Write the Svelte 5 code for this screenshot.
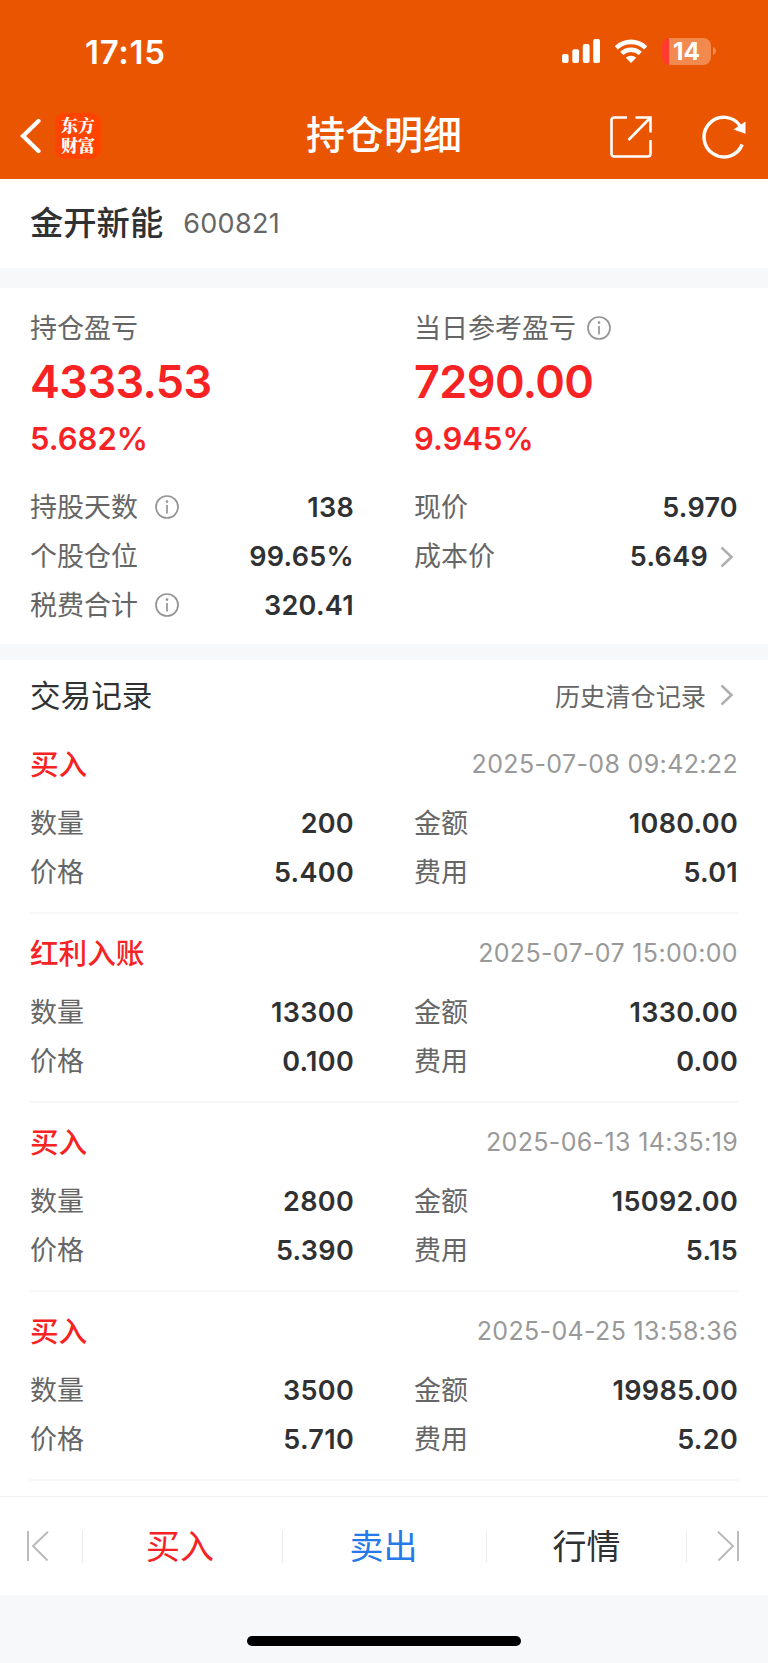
<script>
	const position = [
		{ label: '持仓盈亏', amount: '4333.53', rate: '5.682%', info: false },
		{ label: '当日参考盈亏', amount: '7290.00', rate: '9.945%', info: true }
	];

	const details = [
		{ label: '持股天数', value: '138', info: true },
		{ label: '现价', value: '5.970' },
		{ label: '个股仓位', value: '99.65%' },
		{ label: '成本价', value: '5.649', link: true },
		{ label: '税费合计', value: '320.41', info: true }
	];

	const records = [
		{ type: '买入', time: '2025-07-08 09:42:22', count: '200', total: '1080.00', price: '5.400', fee: '5.01' },
		{ type: '红利入账', time: '2025-07-07 15:00:00', count: '13300', total: '1330.00', price: '0.100', fee: '0.00' },
		{ type: '买入', time: '2025-06-13 14:35:19', count: '2800', total: '15092.00', price: '5.390', fee: '5.15' },
		{ type: '买入', time: '2025-04-25 13:58:36', count: '3500', total: '19985.00', price: '5.710', fee: '5.20' }
	];
</script>

{#snippet infoIcon()}
	<svg class="info" width="24" height="24" viewBox="0 0 24 24" aria-hidden="true">
		<circle cx="12" cy="12" r="11" />
		<path d="M12 10v8.5" />
		<circle class="dot" cx="12" cy="6.6" r="1.3" />
	</svg>
{/snippet}

{#snippet arrow()}
	<svg class="arrow" width="14" height="22" viewBox="0 0 14 22" aria-hidden="true">
		<path d="M1.5 1.5 11.5 11l-10 9.5" />
	</svg>
{/snippet}

<div class="page">
	<header>
		<div class="status">
			<span class="clock">17:15</span>
			<div class="indicators">
				<svg width="38" height="24" viewBox="0 0 38 24">
					<rect x="0" y="15" width="6.6" height="9" rx="2" />
					<rect x="10.3" y="10.3" width="6.8" height="13.7" rx="2" />
					<rect x="20.8" y="5" width="6.8" height="19" rx="2" />
					<rect x="31.2" y="0" width="6.8" height="24" rx="2" />
				</svg>
				<svg class="wifi" width="34" height="24" viewBox="0 0 34 24">
					<path d="M2.3 8.8a21.3 21.3 0 0 1 29.4 0" />
					<path d="M7.7 14.4a13.6 13.6 0 0 1 18.6 0" />
					<path class="solid" d="M17 24l-5.2-5.2a7.8 7.8 0 0 1 10.4 0z" />
				</svg>
				<div class="battery"><span>14</span></div>
				<svg class="nub" width="3" height="8" viewBox="0 0 3 8">
					<path d="M0 0c4 1.6 4 6.4 0 8z" />
				</svg>
			</div>
		</div>
		<nav>
			<div class="side">
				<svg width="22" height="36" viewBox="0 0 22 36">
					<path class="back" d="M19.5 3 4 18 19.5 33" />
				</svg>
				<div class="logo">东方财富</div>
			</div>
			<h1>持仓明细</h1>
			<div class="side actions">
				<svg width="42" height="42" viewBox="0 0 42 42">
					<path d="M17 1.5H4A2.5 2.5 0 0 0 1.5 4v34A2.5 2.5 0 0 0 4 40.5h34a2.5 2.5 0 0 0 2.5-2.5V24" />
					<path d="M25.5 1.5h15v15M40 2 18.5 24" />
				</svg>
				<svg width="44" height="44" viewBox="0 0 44 44">
					<path class="turn" d="M40.2 29.5A19.8 19.8 0 1 1 38.2 11" />
					<path class="tip" d="M43.5 6.5v12.3l-12-4.3z" />
				</svg>
			</div>
		</nav>
	</header>

	<section class="stock">
		<h2>金开新能</h2>
		<span>600821</span>
	</section>

	<section class="summary">
		<div class="grid">
			{#each position as item}
				<div class="profit">
					<div class="label">
						{item.label}
						{#if item.info}{@render infoIcon()}{/if}
					</div>
					<div class="amount">{item.amount}</div>
					<div class="rate">{item.rate}</div>
				</div>
			{/each}
		</div>
		<div class="grid details">
			{#each details as item}
				<div class="row">
					<span class="label">
						{item.label}
						{#if item.info}{@render infoIcon()}{/if}
					</span>
					<span class="value">
						{item.value}
						{#if item.link}{@render arrow()}{/if}
					</span>
				</div>
			{/each}
		</div>
	</section>

	<section class="trades">
		<div class="heading">
			<h3>交易记录</h3>
			<a href="#history">历史清仓记录 {@render arrow()}</a>
		</div>
		{#each records as record}
			<article>
				<div class="title">
					<strong>{record.type}</strong>
					<time>{record.time}</time>
				</div>
				<div class="grid">
					<div class="row"><span class="label">数量</span><span class="value">{record.count}</span></div>
					<div class="row"><span class="label">金额</span><span class="value">{record.total}</span></div>
					<div class="row"><span class="label">价格</span><span class="value">{record.price}</span></div>
					<div class="row"><span class="label">费用</span><span class="value">{record.fee}</span></div>
				</div>
			</article>
		{/each}
	</section>

	<footer>
		<div class="edge">
			<svg width="22" height="30" viewBox="0 0 22 30">
				<path d="M1 0v30M21 .7 6 15l14.5 14.5" />
			</svg>
		</div>
		<div class="tab buy">买入</div>
		<div class="tab sell">卖出</div>
		<div class="tab quote">行情</div>
		<div class="edge last">
			<svg width="22" height="30" viewBox="0 0 22 30">
				<path d="M21 0v30M1 .7 16 15 1.5 29.5" />
			</svg>
		</div>
	</footer>
	<div class="home"><i></i></div>
</div>

<style>
	:global(body) {
		margin: 0;
		background: #f7f8fa;
	}

	.page {
		width: 768px;
		height: 1663px;
		overflow: hidden;
		background: #f7f8fa;
		color: #303133;
		font-family: Inter, 'Noto Sans CJK SC', sans-serif;
		font-size: 27px;
	}

	h1,
	h2,
	h3 {
		margin: 0;
		font-weight: 500;
	}

	svg {
		display: block;
		flex: none;
	}

	header {
		height: 179px;
		background: #ea5502;
		color: #fff;
	}

	.status {
		display: flex;
		justify-content: space-between;
		align-items: center;
		height: 102px;
		padding: 0 52px 0 85px;
	}

	.clock {
		margin-top: 1px;
		font-size: 33px;
		font-weight: 600;
		letter-spacing: 0.7px;
	}

	.indicators {
		display: flex;
		align-items: center;
		fill: #fff;
	}

	.wifi {
		margin: 0 14px;
		fill: none;
		stroke: #fff;
		stroke-width: 4.6;
	}

	.wifi .solid {
		fill: #fff;
		stroke: none;
	}

	.battery {
		width: 49px;
		height: 27px;
		border-radius: 8px;
		background: linear-gradient(to right, #ff3b30 7px, #f28a50 7px);
		font-size: 24.5px;
		font-weight: 700;
		line-height: 27px;
		text-align: center;
	}

	.nub {
		margin-left: 2px;
		fill: #f28a50;
	}

	nav {
		display: flex;
		align-items: center;
		height: 68px;
	}

	.side {
		display: flex;
		align-items: center;
		width: 234px;
		padding-left: 19px;
	}

	nav svg {
		fill: none;
		stroke: #fff;
		stroke-width: 2.6;
	}

	nav .back {
		stroke-width: 4.2;
		stroke-linecap: round;
	}

	nav .turn {
		stroke-width: 3.4;
	}

	nav .tip {
		fill: #fff;
		stroke: none;
	}

	.logo {
		width: 46px;
		height: 46px;
		margin-left: 14px;
		border-radius: 9px;
		background: #ff4400;
		box-sizing: border-box;
		padding: 2px 6px 0;
		font-family: 'Noto Serif CJK SC', 'Noto Sans CJK SC', serif;
		font-size: 17px;
		font-weight: 900;
		line-height: 20px;
	}

	h1 {
		flex: 1;
		font-size: 39px;
		line-height: 68px;
		text-align: center;
		margin-top: -3px;
	}

	.actions {
		justify-content: flex-end;
		gap: 50px;
		width: 231px;
		padding: 2px 22px 0 0;
	}

	.stock {
		display: flex;
		align-items: center;
		height: 89px;
		padding: 0 30px;
		background: #fff;
	}

	.stock h2 {
		margin-top: -6px;
		font-size: 33.3px;
	}

	.stock span {
		margin-left: 20px;
		color: #666;
		letter-spacing: 0.3px;
	}

	.summary {
		margin-top: 20px;
		height: 356px;
		padding: 21px 30px 0;
		background: #fff;
		box-sizing: border-box;
	}

	.grid {
		display: grid;
		grid-template-columns: 324px 324px;
		column-gap: 60px;
	}

	.label {
		display: flex;
		align-items: center;
		color: #666;
		line-height: 40px;
	}

	.profit .info {
		margin-left: 11px;
	}

	.row .info {
		margin-left: 17px;
	}

	.info {
		margin-bottom: 2px;
		fill: none;
		stroke: #949494;
		stroke-width: 1.7;
	}

	.info .dot {
		fill: #949494;
		stroke: none;
	}

	.amount,
	.rate {
		color: #f62223;
		font-weight: 600;
	}

	.amount {
		font-size: 45px;
		line-height: 65px;
		letter-spacing: -0.6px;
	}

	.rate {
		font-size: 31px;
		line-height: 50px;
	}

	.details {
		margin-top: 19px;
	}

	.row {
		display: flex;
		justify-content: space-between;
		align-items: center;
		height: 49px;
	}

	.value {
		display: flex;
		align-items: center;
		font-weight: 600;
		letter-spacing: 0.3px;
	}

	.arrow {
		margin: 0 4px 0 12px;
		fill: none;
		stroke: #b0b0b0;
		stroke-width: 2.6;
	}

	.trades {
		height: 836px;
		margin-top: 16px;
		padding: 0 30px;
		background: #fff;
		box-sizing: border-box;
		overflow: hidden;
	}

	.heading,
	.title {
		display: flex;
		justify-content: space-between;
		align-items: center;
	}

	.heading {
		height: 70px;
		margin-bottom: -5px;
	}

	h3 {
		margin-top: -2px;
		font-size: 30.6px;
		font-weight: 400;
	}

	a {
		display: flex;
		align-items: center;
		color: #666;
		font-size: 25.2px;
		text-decoration: none;
	}

	a .arrow {
		margin-left: 14px;
	}

	article {
		height: 189px;
		border-bottom: 2px solid #f7f7f9;
		box-sizing: border-box;
		padding-top: 7px;
	}

	.title {
		height: 62px;
		margin-bottom: 5px;
	}

	strong {
		margin-top: -2px;
		color: #f62223;
		font-size: 28.6px;
		font-weight: 500;
	}

	time {
		margin-top: 1px;
		color: #999;
		font-size: 25px;
		letter-spacing: 0.35px;
	}

	footer {
		display: flex;
		align-items: center;
		height: 99px;
		border-top: 1px solid #efefef;
		background: #fff;
		box-sizing: border-box;
		font-size: 34px;
	}

	.edge,
	.tab {
		box-sizing: border-box;
		flex: none;
	}

	.edge {
		width: 82px;
		padding-left: 27px;
	}

	.edge svg {
		fill: none;
		stroke: #b8b8b8;
		stroke-width: 1.9;
	}

	.tab {
		width: 200px;
		line-height: 33px;
		border-left: 1px solid #ededed;
		text-align: center;
	}

	.tab.buy {
		padding-right: 5px;
		color: #f62223;
	}

	.tab.sell {
		width: 204px;
		padding-right: 2px;
		color: #247ae8;
	}

	.tab.quote {
		width: 201px;
		border-right: 1px solid #ededed;
	}

	.edge.last {
		padding-left: 30px;
	}

	.home {
		display: flex;
		justify-content: center;
		padding-top: 41px;
	}

	.home i {
		width: 274px;
		height: 10px;
		border-radius: 5px;
		background: #000;
	}
</style>
